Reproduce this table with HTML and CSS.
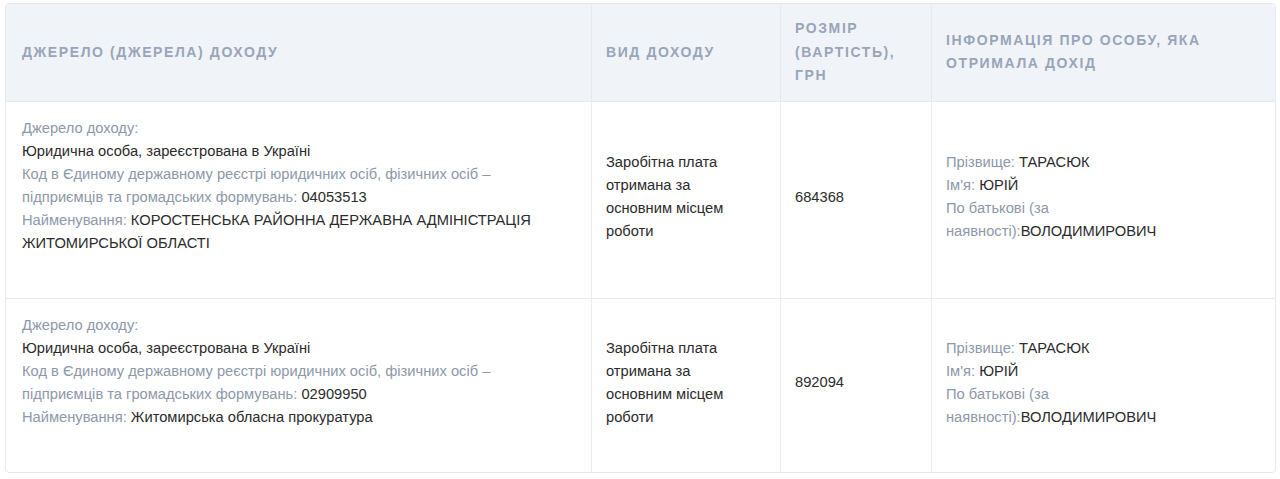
FILE: index.html
```html
<!DOCTYPE html>
<html lang="uk">
<head>
<meta charset="utf-8">
<link rel="stylesheet" href="styles.css">
</head>
<body>
<div class="wrap">
<table class="income">
  <thead>
    <tr>
      <th class="c1">Джерело (джерела) доходу</th>
      <th class="c2">Вид доходу</th>
      <th class="c3">Розмір (вартість), грн</th>
      <th class="c4">Інформація про особу, яка отримала дохід</th>
    </tr>
  </thead>
  <tbody>
    <tr>
      <td class="c1">
        <div class="src">
          <span class="lbl">Джерело доходу:</span><br>
          <span class="val">Юридична особа, зареєстрована в Україні</span><br>
          <span class="lbl">Код в Єдиному державному реєстрі юридичних осіб, фізичних осіб – підприємців та громадських формувань:</span> <span class="val">04053513</span><br>
          <span class="lbl">Найменування:</span> <span class="val">КОРОСТЕНСЬКА РАЙОННА ДЕРЖАВНА АДМІНІСТРАЦІЯ ЖИТОМИРСЬКОЇ ОБЛАСТІ</span>
        </div>
      </td>
      <td class="c2"><span class="val">Заробітна плата отримана за основним місцем роботи</span></td>
      <td class="c3"><span class="val">684368</span></td>
      <td class="c4">
        <span class="lbl">Прізвище:</span> <span class="val">ТАРАСЮК</span><br>
        <span class="lbl">Ім'я:</span> <span class="val">ЮРІЙ</span><br>
        <span class="lbl">По батькові (за наявності):</span><span class="val">ВОЛОДИМИРОВИЧ</span>
      </td>
    </tr>
    <tr>
      <td class="c1">
        <div class="src">
          <span class="lbl">Джерело доходу:</span><br>
          <span class="val">Юридична особа, зареєстрована в Україні</span><br>
          <span class="lbl">Код в Єдиному державному реєстрі юридичних осіб, фізичних осіб – підприємців та громадських формувань:</span> <span class="val">02909950</span><br>
          <span class="lbl">Найменування:</span> <span class="val">Житомирська обласна прокуратура</span>
        </div>
      </td>
      <td class="c2"><span class="val">Заробітна плата отримана за основним місцем роботи</span></td>
      <td class="c3"><span class="val">892094</span></td>
      <td class="c4">
        <span class="lbl">Прізвище:</span> <span class="val">ТАРАСЮК</span><br>
        <span class="lbl">Ім'я:</span> <span class="val">ЮРІЙ</span><br>
        <span class="lbl">По батькові (за наявності):</span><span class="val">ВОЛОДИМИРОВИЧ</span>
      </td>
    </tr>
  </tbody>
</table>
</div>
</body>
</html>
```
FILE: styles.css
```css
* { box-sizing: border-box; }
html, body { margin: 0; background: #fff; }
body {
  font-family: "Liberation Sans", Arial, sans-serif;
  font-size: 14.7px;
  color: #333;
}
.wrap {
  padding: 3px 4px 0 5px;
}
.income {
  width: 100%;
  border-collapse: separate;
  border-spacing: 0;
  border: 1px solid #e6eaef;
  border-radius: 4px;
  overflow: hidden;
  table-layout: fixed;
}
.income th {
  background: #f0f4f9;
  color: #98a5b8;
  font-weight: bold;
  font-size: 14px;
  letter-spacing: 1.6px;
  text-transform: uppercase;
  text-align: left;
  line-height: 23.5px;
  padding: 13px 14px;
  vertical-align: middle;
  border-bottom: 1px solid #e6eaef;
  border-left: 1px solid #e6eaef;
}
.income td {
  vertical-align: middle;
  line-height: 23px;
  padding: 15px 14px 20px;
  border-left: 1px solid #e9ecf0;
  border-bottom: 1px solid #e6eaef;
}
.income tbody tr:last-child td { border-bottom: 0; }
.income th.c1, .income td.c1 { border-left: 0; padding-left: 16px; }
.income td.c1 { padding-right: 50px; }
.income td.c2 { padding-right: 20px; }
.income .c1 { width: 585px; }
.income .c2 { width: 189px; }
.income .c3 { width: 151px; }
.income td.c3, .income th.c3 { padding-left: 14px; }
.src { padding-bottom: 23px; }
.lbl { color: #8d98a9; }
.val { color: #2b2b2b; }
```
